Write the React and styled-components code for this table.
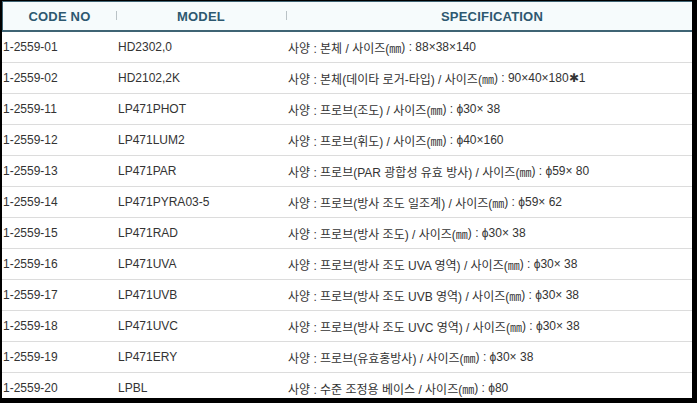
import React from 'react'
import styled, { createGlobalStyle } from 'styled-components'

const GlobalStyle = createGlobalStyle`
  html, body {
    margin: 0;
    padding: 0;
    background: #000;
    overflow: hidden;
  }
`

const Frame = styled.div`
  margin: 1px 0 0 2px;
  width: 690px;
  height: 397px;
  background: #fff;
  overflow: hidden;
  font-family: "Liberation Sans", "Noto Sans CJK KR", sans-serif;
  -webkit-font-smoothing: antialiased;
`

const Grid = styled.div`
  display: grid;
  grid-template-columns: 114px 170px 1fr;
`

const HeadCell = styled.div`
  position: relative;
  height: 28px;
  display: flex;
  align-items: center;
  justify-content: center;
  background: #f6fbfc;
  border-top: 1px solid #3f6474;
  border-bottom: 2px solid #3f6474;
  border-left: ${props => (props.first ? '1px solid #3f6474' : 'none')};
  color: #2d5870;
  font-size: 13px;
  font-weight: bold;
  letter-spacing: 0.2px;
  padding-left: ${props => props.shift || 0}px;

  &::before {
    content: ${props => (props.first ? 'none' : '""')};
    position: absolute;
    left: 0;
    top: 9px;
    width: 1px;
    height: 9px;
    background: #b9c2c6;
  }
`

const Cell = styled.div`
  height: 30px;
  display: flex;
  align-items: center;
  padding-left: ${props => props.pad || 2}px;
  border-bottom: 1px solid #dcdcdc;
  color: #333;
  font-size: 12px;
  white-space: nowrap;
  overflow: hidden;
`

const Unit = styled.span`
  font-family: "Noto Sans CJK KR", sans-serif;
  color: #333;
`

const rows = [
  ['1-2559-01', 'HD2302,0', '사양 : 본체 / 사이즈', ' : 88×38×140'],
  ['1-2559-02', 'HD2102,2K', '사양 : 본체(데이타 로거-타입) / 사이즈', ' : 90×40×180✱1'],
  ['1-2559-11', 'LP471PHOT', '사양 : 프로브(조도) / 사이즈', ' : ϕ30× 38'],
  ['1-2559-12', 'LP471LUM2', '사양 : 프로브(휘도) / 사이즈', ' : ϕ40×160'],
  ['1-2559-13', 'LP471PAR', '사양 : 프로브(PAR 광합성 유효 방사) / 사이즈', ' : ϕ59× 80'],
  ['1-2559-14', 'LP471PYRA03-5', '사양 : 프로브(방사 조도 일조계) / 사이즈', ' : ϕ59× 62'],
  ['1-2559-15', 'LP471RAD', '사양 : 프로브(방사 조도) / 사이즈', ' : ϕ30× 38'],
  ['1-2559-16', 'LP471UVA', '사양 : 프로브(방사 조도 UVA 영역) / 사이즈', ' : ϕ30× 38'],
  ['1-2559-17', 'LP471UVB', '사양 : 프로브(방사 조도 UVB 영역) / 사이즈', ' : ϕ30× 38'],
  ['1-2559-18', 'LP471UVC', '사양 : 프로브(방사 조도 UVC 영역) / 사이즈', ' : ϕ30× 38'],
  ['1-2559-19', 'LP471ERY', '사양 : 프로브(유효홍방사) / 사이즈', ' : ϕ30× 38'],
  ['1-2559-20', 'LPBL', '사양 : 수준 조정용 베이스 / 사이즈', ' : ϕ80']
]

const App = () => {
  return (
    <Frame>
      <GlobalStyle />
      <Grid>
        <HeadCell first>CODE NO</HeadCell>
        <HeadCell>MODEL</HeadCell>
        <HeadCell shift={6}>SPECIFICATION</HeadCell>
        {rows.map((row, i) => (
          <React.Fragment key={'row' + i}>
            <Cell pad={1}>{row[0]}</Cell>
            <Cell>{row[1]}</Cell>
            <Cell>
              {row[2]}(<Unit>㎜</Unit>){row[3]}
            </Cell>
          </React.Fragment>
        ))}
      </Grid>
    </Frame>
  )
}

export default App
